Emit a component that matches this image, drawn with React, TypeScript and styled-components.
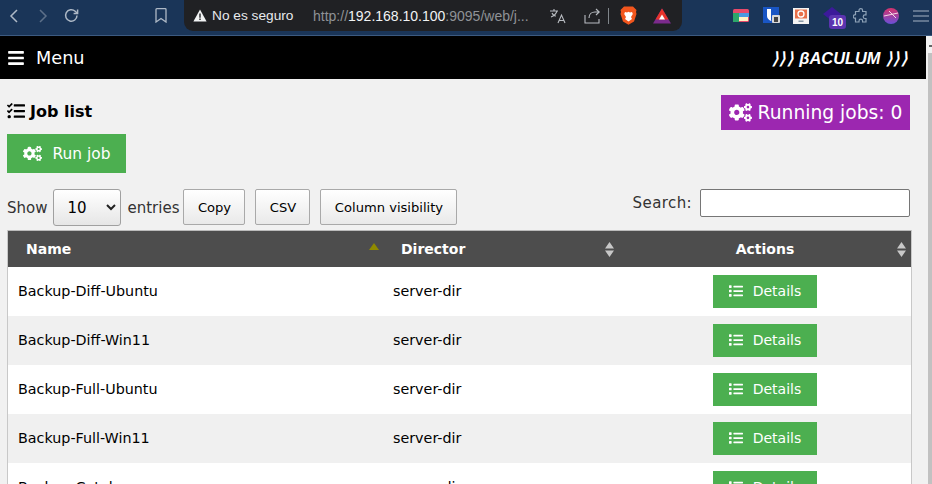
import React from "react";
import styled, { createGlobalStyle } from "styled-components";
import { FaBars, FaCogs, FaList, FaTasks } from "react-icons/fa";

const Global = createGlobalStyle`
  html, body { margin: 0; padding: 0; width: 932px; height: 484px; overflow: hidden; background: #f1f1f1; }
  * { box-sizing: border-box; }
`;

const Page = styled.div`
  width: 932px; height: 484px; overflow: hidden;
  display: flex; flex-direction: column;
  font-family: "DejaVu Sans", Verdana, sans-serif;
  color: #000;
`;
const Chrome = styled.div`
  height: 36px; flex: none; background: #1a3558; border-bottom: 1px solid #3c5a80;
  display: flex; align-items: flex-start; position: relative;
`;
const NavIcons = styled.div`
  width: 184px; height: 31px; flex: none; display: flex; align-items: center; color: #b6c2d0;
`;
const NavIcon = styled.svg<{ $x: number }>`
  margin-left: ${(p) => p.$x}px; flex: none;
`;
const AddressBar = styled.div`
  width: 498px; height: 31px; flex: none; background: #202124; border-radius: 0 0 9px 9px;
  display: flex; align-items: center; font-family: "Liberation Sans", Arial, sans-serif;
  font-size: 14px; color: #e8eaed; position: relative;
`;
const Secure = styled.span`
  margin-left: 9px; display: flex; align-items: center; gap: 5px; width: 120px; white-space: nowrap; font-size: 13.7px;
`;
const Url = styled.span`
  color: #8f9296; white-space: nowrap; width: 236px;
  b { font-weight: 400; color: #f1f3f4; }
`;
const Exts = styled.div`
  flex: 1; height: 31px; display: flex; align-items: center; position: relative;
`;
const ExtIcon = styled.svg<{ $x: number }>`
  position: absolute; left: ${(p) => p.$x}px;
`;
const ExtBadge = styled.span`
  position: absolute; left: 147px; top: 15px; width: 17px; height: 14px; border-radius: 3px; background: #5b34b0;
  color: #fff; font: 700 10px "Liberation Sans", Arial, sans-serif; display: flex; align-items: center; justify-content: center;
`;
const Below = styled.div`
  flex: 1; display: flex; min-height: 0;
`;
const Main = styled.div`
  width: 926px; flex: none; display: flex; flex-direction: column;
`;
const Scrollbar = styled.div`
  flex: 1; background: #f1f1f1; display: flex; flex-direction: column; align-items: flex-end; padding-top: 9px;
`;
const ScrollArrow = styled.div`
  width: 3px; height: 2px; background: #666; margin: 0 0 6px;
`;
const Thumb = styled.div`
  width: 4px; flex: 1; background: #c1c1c1;
`;
const TopBar = styled.div`
  height: 43px; flex: none; background: #000; color: #fff; display: flex; align-items: center;
  justify-content: space-between; padding: 0 18px 0 7px;
`;
const MenuLabel = styled.div`
  display: flex; align-items: center; gap: 11px; font-size: 17.7px;
`;
const Brand = styled.div`
  font-family: "Liberation Sans", Arial, sans-serif; font-style: italic; font-weight: 700; font-size: 16.4px;
  display: flex; align-items: center; gap: 5px; padding-top: 2px;
`;
const BrandMarks = styled.span`
  letter-spacing: 1.5px;
`;
const Content = styled.div`
  padding: 0 16px 0 7px; flex: 1; min-height: 0; display: flex; flex-direction: column;
`;
const HeaderRow = styled.div`
  display: flex; justify-content: space-between; align-items: flex-start; margin-top: 16px; height: 39px; flex: none;
`;
const Title = styled.div`
  display: flex; align-items: center; gap: 5px; font-size: 16px; font-weight: 700; height: 32px;
`;
const RunningBadge = styled.div`
  background: #9c27b0; color: #fff; height: 35px; width: 189px; display: flex; align-items: center;
  justify-content: center; gap: 6px; font-size: 18.7px; white-space: nowrap;
`;
const RunButton = styled.button`
  width: 119px; height: 39px; flex: none; background: #4caf50; color: #fff; border: 0; padding: 0;
  display: flex; align-items: center; justify-content: center; gap: 11px;
  font: 15.4px "DejaVu Sans", Verdana, sans-serif;
`;
const Controls = styled.div`
  display: flex; align-items: flex-start; justify-content: space-between; height: 36px; margin-top: 16px; flex: none;
  font-size: 15px; color: #333;
`;
const ControlsLeft = styled.div`
  display: flex; align-items: center;
`;
const LengthSelect = styled.div`
  width: 68px; height: 37px; margin: 0 6px; border: 1px solid #a0a0a0; border-radius: 3px;
  background: linear-gradient(#fff, #e6e6e6); display: flex; align-items: center; justify-content: space-between;
  padding: 0 0 0 13px; color: #000; font-size: 15px;
`;
const Caret = styled.svg`
  margin-right: 4px;
`;
const DtButton = styled.div<{ $w: number; $before: number }>`
  width: ${(p) => p.$w}px; margin-left: ${(p) => p.$before}px; height: 36px; align-self: flex-start;
  border: 1px solid #a9a9a9; border-radius: 2px;
  background: linear-gradient(#fff, #e9e9e9); display: flex; align-items: center; justify-content: center;
  font-size: 13.1px; color: #000; white-space: nowrap;
`;
const SearchWrap = styled.div`
  display: flex; align-items: flex-start; gap: 8px; letter-spacing: 0.4px;
`;
const SearchLabel = styled.span`
  margin-top: 5px;
`;
const SearchBox = styled.div`
  width: 210px; height: 28px; background: #fff; border: 1px solid #767676; border-radius: 2px;
`;
const Table = styled.div`
  margin-top: 5px; border-left: 1px solid #c8c8c8; border-right: 1px solid #c8c8c8; width: 905px; flex: none;
`;
const HeadRow = styled.div`
  display: grid; grid-template-columns: 375px 236px 1fr; height: 37px; background: #4d4d4d; border-top: 1px solid #bbb;
  color: #fff; font-weight: 700; font-size: 14px; align-items: center;
`;
const HeadCell = styled.div<{ $pad: number; $center?: boolean }>`
  position: relative; height: 100%; display: flex; align-items: center;
  padding-left: ${(p) => p.$pad}px; ${(p) => (p.$center ? "justify-content: center;" : "")}
`;
const SortMark = styled.svg<{ $right: number }>`
  position: absolute; right: ${(p) => p.$right}px; top: 11px;
`;
const Row = styled.div<{ $odd: boolean }>`
  display: grid; grid-template-columns: 375px 236px 1fr; height: 49px; align-items: center;
  background: ${(p) => (p.$odd ? "#fff" : "#f0f0f0")}; font-size: 14.3px; color: #000;
`;
const NameCell = styled.div`
  padding: 0 0 2px 10px; white-space: nowrap;
`;
const DirCell = styled.div`
  padding: 0 0 2px 10px; white-space: nowrap;
`;
const ActionCell = styled.div`
  display: flex; justify-content: center;
`;
const DetailsButton = styled.div`
  width: 104px; height: 33px; background: #4caf50; color: #fff; display: flex; align-items: center; justify-content: center; gap: 10px;
  font-size: 14px; padding-bottom: 1px;
`;

const jobs = ["Backup-Diff-Ubuntu", "Backup-Diff-Win11", "Backup-Full-Ubuntu", "Backup-Full-Win11", "Backup-Catalog"];

export default function App() {
  return (
    <Page>
      <Global />
      <Chrome>
        <NavIcons>
          <NavIcon $x={9} width="10" height="16" viewBox="0 0 10 16" fill="none" stroke="#aeb9c6" strokeWidth="1.5"><path d="M8 2 2 8l6 6" /></NavIcon>
          <NavIcon $x={19} width="10" height="16" viewBox="0 0 10 16" fill="none" stroke="#5d7089" strokeWidth="1.5"><path d="M2 2l6 6-6 6" /></NavIcon>
          <NavIcon $x={15} width="17" height="17" viewBox="0 0 17 17" fill="none" stroke="#aeb9c6" strokeWidth="1.5"><path d="M14 8.500a5.700 5.700 0 1 1-1.800-4.200L14 6" /><path d="M14.600 2.500v4h-4" /></NavIcon>
          <NavIcon $x={75} width="12" height="15" viewBox="0 0 12 15" fill="none" stroke="#aeb9c6" strokeWidth="1.300"><path d="M1 1.500q0-.8.8-.8h8.400q.8 0 .8.800V14L6 10.500 1 14z" /></NavIcon>
        </NavIcons>
        <AddressBar>
          <Secure>
            <svg width="14" height="13" viewBox="0 0 14 13"><path d="M7 0.500 13.600 12.500H.4z" fill="#f1f3f4" /><path d="M6.300 4.500h1.400v4.200H6.300zM6.300 9.500h1.400v1.400H6.300z" fill="#202124" /></svg>
            No es seguro
          </Secure>
          <Url>http://<b>192.168.10.100</b>:9095/web/j...</Url>
          <svg width="18" height="16" viewBox="0 0 18 16" fill="none" stroke="#b8bcc1" strokeWidth="1.100"><path d="M1 3h8M5 1v2M8 3c-1 3-3 5-6 6M3 5c1 2 3 3 4 3" /><path d="M9 15l3.500-8 3.500 8M10.200 12.500h4.600" /></svg>
          <svg style={{ marginLeft: 17 }} width="16" height="16" viewBox="0 0 16 16" fill="none" stroke="#b8bcc1" strokeWidth="1.100"><path d="M1 7v8h14v-4" /><path d="M5 10c0-4 3-6 6-6h4M12 1l3.200 3L12 7" /></svg>
          <svg style={{ marginLeft: 8 }} width="1" height="16"><rect width="1" height="16" fill="#80868b" /></svg>
          <svg style={{ marginLeft: 11 }} width="17" height="19" viewBox="0 0 17 19"><path d="M4 .5h9L16.500 4l-.5 2 .5 2-2.500 7.500L8.500 18.800 3 15.500.5 8 1 6 .5 4z" fill="#f2561d" /><path d="M5 6l2 .5 1.500-.8 1.500.8 2-.5.8 2L11 11l1 2-3.500 2.500L5 13l1-2-1.800-3z" fill="#fff" /></svg>
          <svg style={{ marginLeft: 16 }} width="18" height="16" viewBox="0 0 18 16"><path d="M9 .5 18 15.500H0z" fill="#7b2a8c" /><path d="M9 .5 15.500 11.500H2.500z" fill="#e8332a" /><path d="M9 6.500l3 5H6z" fill="#fff" /></svg>
        </AddressBar>
        <Exts>
          <ExtIcon $x={51} width="16" height="13" viewBox="0 0 16 13"><rect width="16" height="13" rx="1.500" fill="#e84a6a" /><rect y="4" width="6" height="9" fill="#2ea66a" /><rect x="6" y="4" width="10" height="4" fill="#4a9ae0" /><rect x="6" y="8" width="9" height="4" fill="#fff3c4" /></ExtIcon>
          <ExtIcon $x={81} width="17" height="17" viewBox="0 0 17 17"><rect width="16" height="16" fill="#1a56c4" /><path d="M4 2h8v7q0 3-4 5-4-2-4-5z" fill="#fff" /><path d="M8 2h4v7q0 3-4 5z" fill="#1a56c4" /><rect x="9" y="8" width="8" height="8" rx="1" fill="#d8d8d8" /><rect x="11" y="10" width="4" height="5" fill="#444" /></ExtIcon>
          <ExtIcon $x={111} width="16" height="16" viewBox="0 0 16 16"><rect width="16" height="16" fill="#f4f4f4" /><rect x="2" y="1.500" width="12" height="9" fill="#e8704a" /><circle cx="8" cy="6" r="3" fill="none" stroke="#fff" strokeWidth="1.300" /><path d="M5.500 12.500h5v1.500h-5z" fill="#8a9aa8" /></ExtIcon>
          <ExtIcon $x={141} style={{ top: 7 }} width="18" height="14" viewBox="0 0 18 14"><path d="M9 0l9 7-9 7-9-7z" fill="#3c1a9a" /></ExtIcon>
          <ExtBadge>10</ExtBadge>
          <ExtIcon $x={171} width="16" height="16" viewBox="0 0 16 16" fill="none" stroke="#8fa3b8" strokeWidth="1.200"><path d="M6 2.500q0-1.800 1.800-1.800t1.800 1.800v1h3.400v3.400h-1q-1.800 0-1.800 1.800t1.800 1.800h1V14H9.600v-1q0-1.800-1.800-1.800T6 13v1H2.500v-3.800h-1Q0 10 .3 8.300T2.500 6.700V3.500H6z" /></ExtIcon>
          <ExtIcon $x={201} width="16" height="16" viewBox="0 0 16 16"><defs><linearGradient id="pg" x1="0" y1="0" x2="0" y2="1"><stop offset="0" stopColor="#d6336c" /><stop offset="1" stopColor="#6a4fd8" /></linearGradient></defs><circle cx="8" cy="8" r="8" fill="url(#pg)" /><path d="M1 8l14-3M6 3l7 7" stroke="#f6d8e4" strokeWidth="1" /></ExtIcon>
          <ExtIcon $x={231} width="16" height="12" viewBox="0 0 16 12"><path d="M0 1h16M0 6h16M0 11h16" stroke="#a6b4c4" strokeWidth="1" /></ExtIcon>
        </Exts>
      </Chrome>
      <Below>
        <Main>
          <TopBar>
            <MenuLabel><FaBars size={18} />Menu</MenuLabel>
            <Brand><BrandMarks>⟩⟩⟩</BrandMarks>βACULUM<BrandMarks>⟩⟩⟩</BrandMarks></Brand>
          </TopBar>
          <Content>
            <HeaderRow>
              <Title><FaTasks size={18} />Job list</Title>
              <RunningBadge><FaCogs size={23} />Running jobs: 0</RunningBadge>
            </HeaderRow>
            <RunButton><FaCogs size={19} />Run job</RunButton>
            <Controls>
              <ControlsLeft>
                Show
                <LengthSelect>10<Caret width="10" height="7" viewBox="0 0 10 7" fill="none" stroke="#222" strokeWidth="2"><path d="M1 1l4 4 4-4" /></Caret></LengthSelect>
                entries
                <DtButton $w={62} $before={4}>Copy</DtButton>
                <DtButton $w={55} $before={10}>CSV</DtButton>
                <DtButton $w={137} $before={10}>Column visibility</DtButton>
              </ControlsLeft>
              <SearchWrap><SearchLabel>Search:</SearchLabel><SearchBox /></SearchWrap>
            </Controls>
            <Table>
              <HeadRow>
                <HeadCell $pad={18}>Name<SortMark $right={4} width="10" height="9" viewBox="0 0 10 9"><path d="M5 1l5 7H0z" fill="#8f8a00" /></SortMark></HeadCell>
                <HeadCell $pad={18}>Director<SortMark $right={5} width="9" height="15" viewBox="0 0 9 15"><path d="M4.500 0 9 6.500H0zM4.500 15 0 8.500h9z" fill="#c8c8c8" /></SortMark></HeadCell>
                <HeadCell $pad={0} $center>Actions<SortMark $right={5} width="9" height="15" viewBox="0 0 9 15"><path d="M4.500 0 9 6.500H0zM4.500 15 0 8.500h9z" fill="#c8c8c8" /></SortMark></HeadCell>
              </HeadRow>
              {jobs.map((j, i) => (
                <Row key={j} $odd={i % 2 === 0}>
                  <NameCell>{j}</NameCell>
                  <DirCell>server-dir</DirCell>
                  <ActionCell><DetailsButton><FaList size={14} />Details</DetailsButton></ActionCell>
                </Row>
              ))}
            </Table>
          </Content>
        </Main>
        <Scrollbar><ScrollArrow /><Thumb /></Scrollbar>
      </Below>
    </Page>
  );
}
